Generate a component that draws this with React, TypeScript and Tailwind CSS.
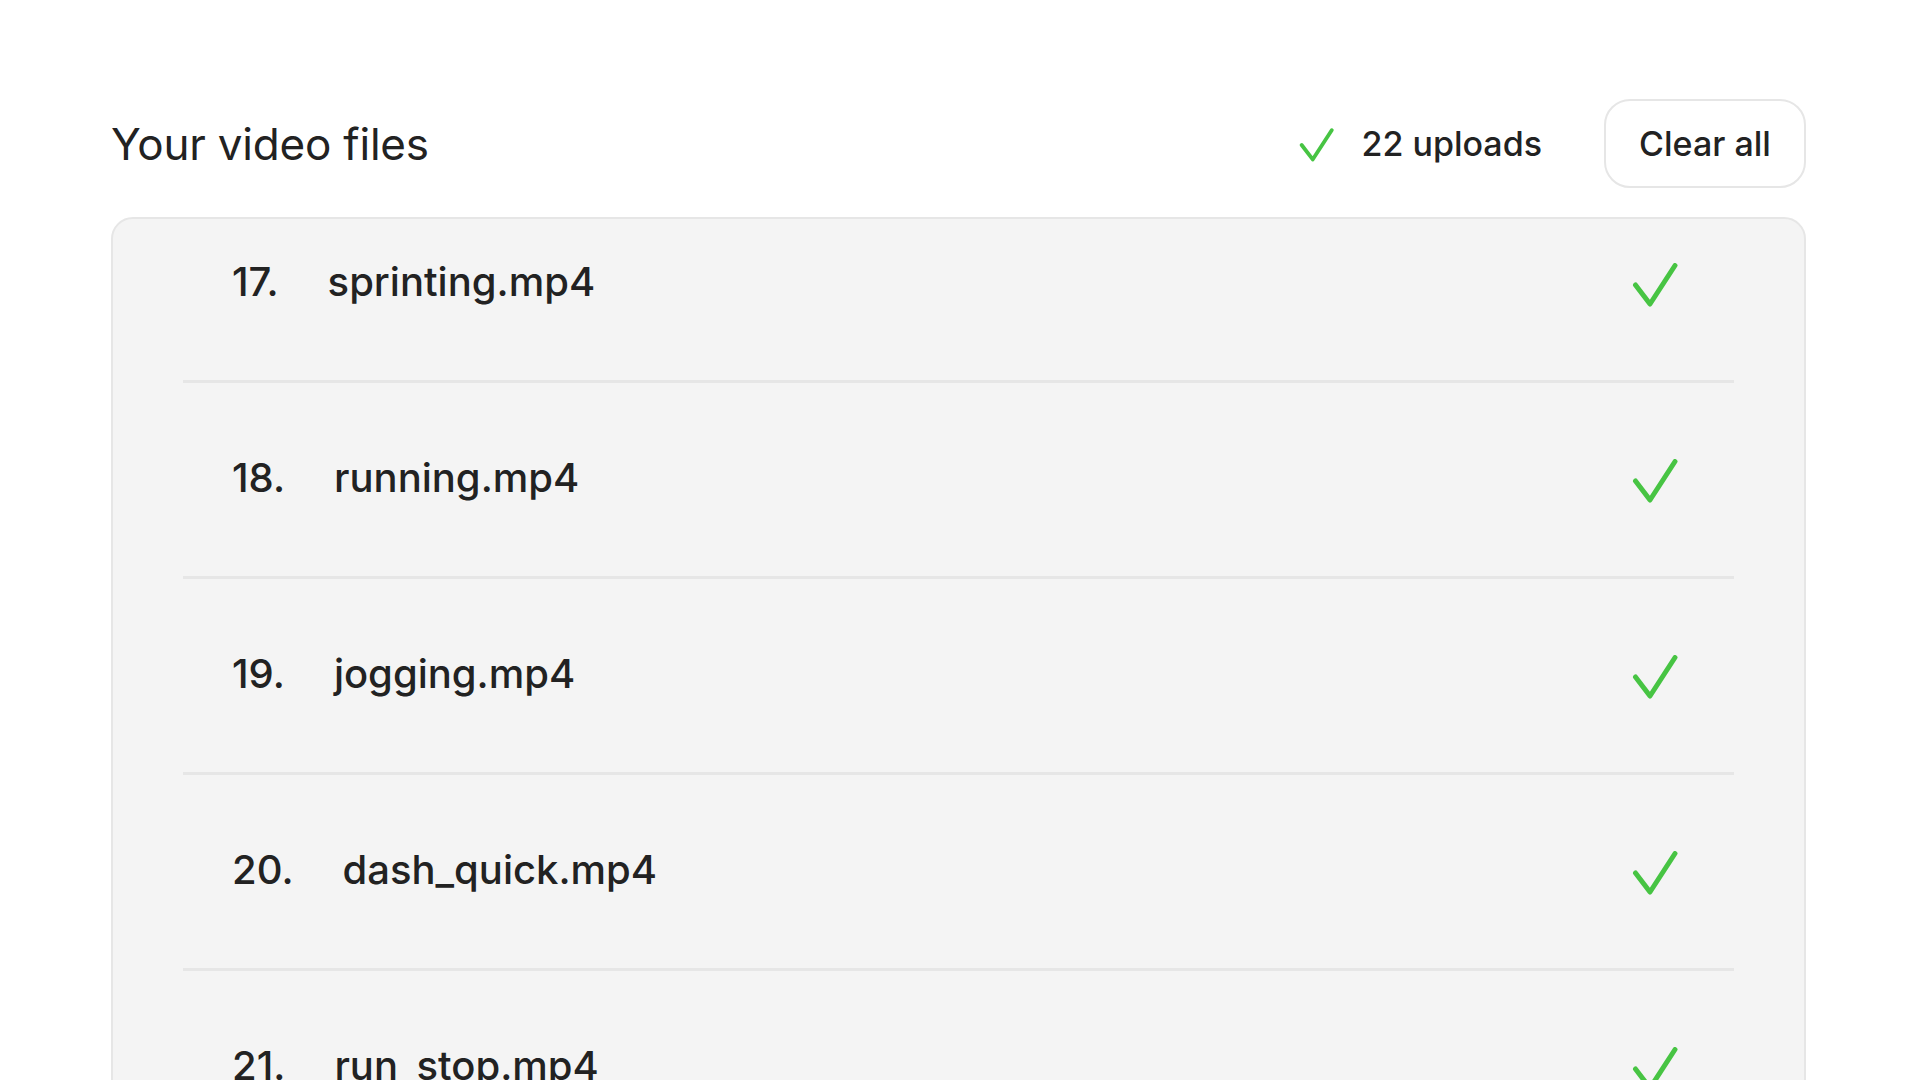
import React from "react";

const FILES = [
  { n: 17, name: "sprinting.mp4" },
  { n: 18, name: "running.mp4" },
  { n: 19, name: "jogging.mp4" },
  { n: 20, name: "dash_quick.mp4" },
  { n: 21, name: "run_stop.mp4" },
  { n: 22, name: "walk_slow.mp4" },
];

function Check({ className, stroke = 5 }: { className?: string; stroke?: number }) {
  return (
    <svg viewBox="0 0 46 44" className={className} fill="none">
      <path
        d="M3.5 22 L18 41 L43 2.5"
        stroke="#47c443"
        strokeWidth={stroke}
        strokeLinecap="round"
        strokeLinejoin="round"
      />
    </svg>
  );
}

export default function App() {
  return (
    <div
      className="w-full h-[1080px] overflow-hidden bg-white text-[#222222]"
      style={{ fontFamily: "Inter, 'Noto Sans', sans-serif" }}
    >
      <div className="pl-[111px] pr-[114px] pt-[99px]">
        {/* Header */}
        <div className="flex items-center justify-between">
          <h1 className="text-[44px] font-normal tracking-[-0.2px] leading-none">
            Your video files
          </h1>
          <div className="flex items-center">
            <Check className="w-[35px] h-[34px] mr-[27px] mt-[2px]" stroke={5} />
            <span className="text-[34px] font-medium leading-none mr-[62px]">22 uploads</span>
            <button className="h-[89px] w-[202px] rounded-[26px] border-2 border-[#e6e6e6] bg-white text-[34px] font-medium leading-none text-[#222222]">
              Clear all
            </button>
          </div>
        </div>

        {/* List panel */}
        <div className="mt-[29px] h-[900px] rounded-[22px] border-2 border-[#e6e6e6] bg-[#f4f4f4] overflow-hidden px-[70px]">
          <div className="mt-[-32px]">
            {FILES.map((f) => (
              <div
                key={f.n}
                className="h-[196px] border-b-[3px] border-[#e6e6e6] flex items-center pl-[49px] pr-[56px] pb-[4px]"
              >
                <span className="text-[40px] font-medium leading-none">{f.n}.</span>
                <span className="text-[40px] font-medium leading-none ml-[49px]">{f.name}</span>
                <Check className="ml-auto mt-[7px] w-[46px] h-[44px]" />
              </div>
            ))}
          </div>
        </div>
      </div>
    </div>
  );
}
